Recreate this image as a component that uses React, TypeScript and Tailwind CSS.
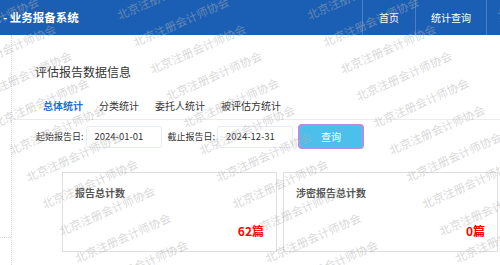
import React from 'react';

const FONT = '"Noto Sans CJK SC", "Noto Sans", sans-serif';

// watermark lattice: each row shifts right a bit, columns 190px apart
const marks: { x: number; y: number }[] = [];
for (let r = -2; r < 12; r++) {
  for (let k = -3; k < 4; k++) {
    const x = 181 + 16.5 * r + 190 * k;
    const y = 22 + 27 * r;
    if (x > -80 && x < 580 && y > -30 && y < 300) marks.push({ x, y });
  }
}

function Header() {
  return (
    <header className="h-[35px] bg-[#1b5fb4] flex items-stretch justify-between text-white">
      <div className="flex items-center pl-[3px] text-[11.5px] font-bold">- 业务报备系统</div>
      <nav className="flex items-stretch text-[10px]">
        <a className="flex items-center px-[16px] border-l border-white/20">首页</a>
        <a className="flex items-center px-[15px] border-l border-white/20">统计查询</a>
        <div className="w-[14px] border-l border-white/20" />
      </nav>
    </header>
  );
}

function DateField({ label, value }: { label: string; value: string }) {
  return (
    <div className="flex items-center gap-[2px]">
      <span className="text-[9px] text-[#333]">{label}:</span>
      <div className="w-[76px] h-[22px] border border-[#e6ebf5] rounded-[3px] flex items-center pl-[8px] text-[9.5px] text-[#333]">
        {value}
      </div>
    </div>
  );
}

function StatCard({ title, value }: { title: string; value: string }) {
  return (
    <div className="w-[215px] h-[80px] border border-[#dedede] flex flex-col justify-between px-[12px] pt-[13px] pb-[12px]">
      <div className="text-[10px] leading-[14px] font-bold text-[#555]">{title}</div>
      <div className="text-right text-[12px] leading-[16px] font-bold text-[#f00]">{value}</div>
    </div>
  );
}

export default function App() {
  const tabs = ['总体统计', '分类统计', '委托人统计', '被评估方统计'];
  return (
    <div className="relative min-h-screen bg-white overflow-hidden" style={{ fontFamily: FONT }}>
      <Header />
      <div className="flex">
        <aside className="w-[12px] shrink-0 border-r border-dotted border-[#d6d6d6] min-h-[230px]">
          <div className="h-[203px] border-b border-dotted border-[#d6d6d6]" />
        </aside>
        <main className="flex-1 min-w-0">
          <h2 className="mt-[29px] pl-[23px] text-[12px] leading-[16px] text-[#333]">评估报告数据信息</h2>
          <div className="mt-[19px] pl-[23px] pb-[6px] border-b border-[#ebebeb] flex text-[10px] leading-[14px]">
            {tabs.map((t, i) => (
              <span key={t} className={i === 0 ? 'px-[8px] font-bold text-[#1f6fd1]' : 'px-[8px] text-[#333]'}>
                {t}
              </span>
            ))}
          </div>
          <div className="mt-[4px] pl-[24px] flex items-center gap-[6px] h-[25px]">
            <DateField label="起始报告日" value="2024-01-01" />
            <DateField label="截止报告日" value="2024-12-31" />
            <button className="ml-[-1px] w-[66px] h-[25px] rounded-[4px] border-2 border-[#b38de6] bg-[#4cbfeb] text-white text-[10px]">
              查询
            </button>
          </div>
          <div className="mt-[23px] ml-[50px] flex gap-[6px]">
            <StatCard title="报告总计数" value="62篇" />
            <StatCard title="涉密报告总计数" value="0篇" />
          </div>
        </main>
      </div>
      <div className="pointer-events-none absolute inset-0">
        {marks.map((m, i) => (
          <span
            key={i}
            className="absolute whitespace-nowrap text-[11.5px] text-[rgba(175,175,175,0.5)] -translate-x-1/2 -translate-y-1/2 rotate-[-24deg]"
            style={{ left: m.x, top: m.y }}
          >
            北京注册会计师协会
          </span>
        ))}
      </div>
    </div>
  );
}
